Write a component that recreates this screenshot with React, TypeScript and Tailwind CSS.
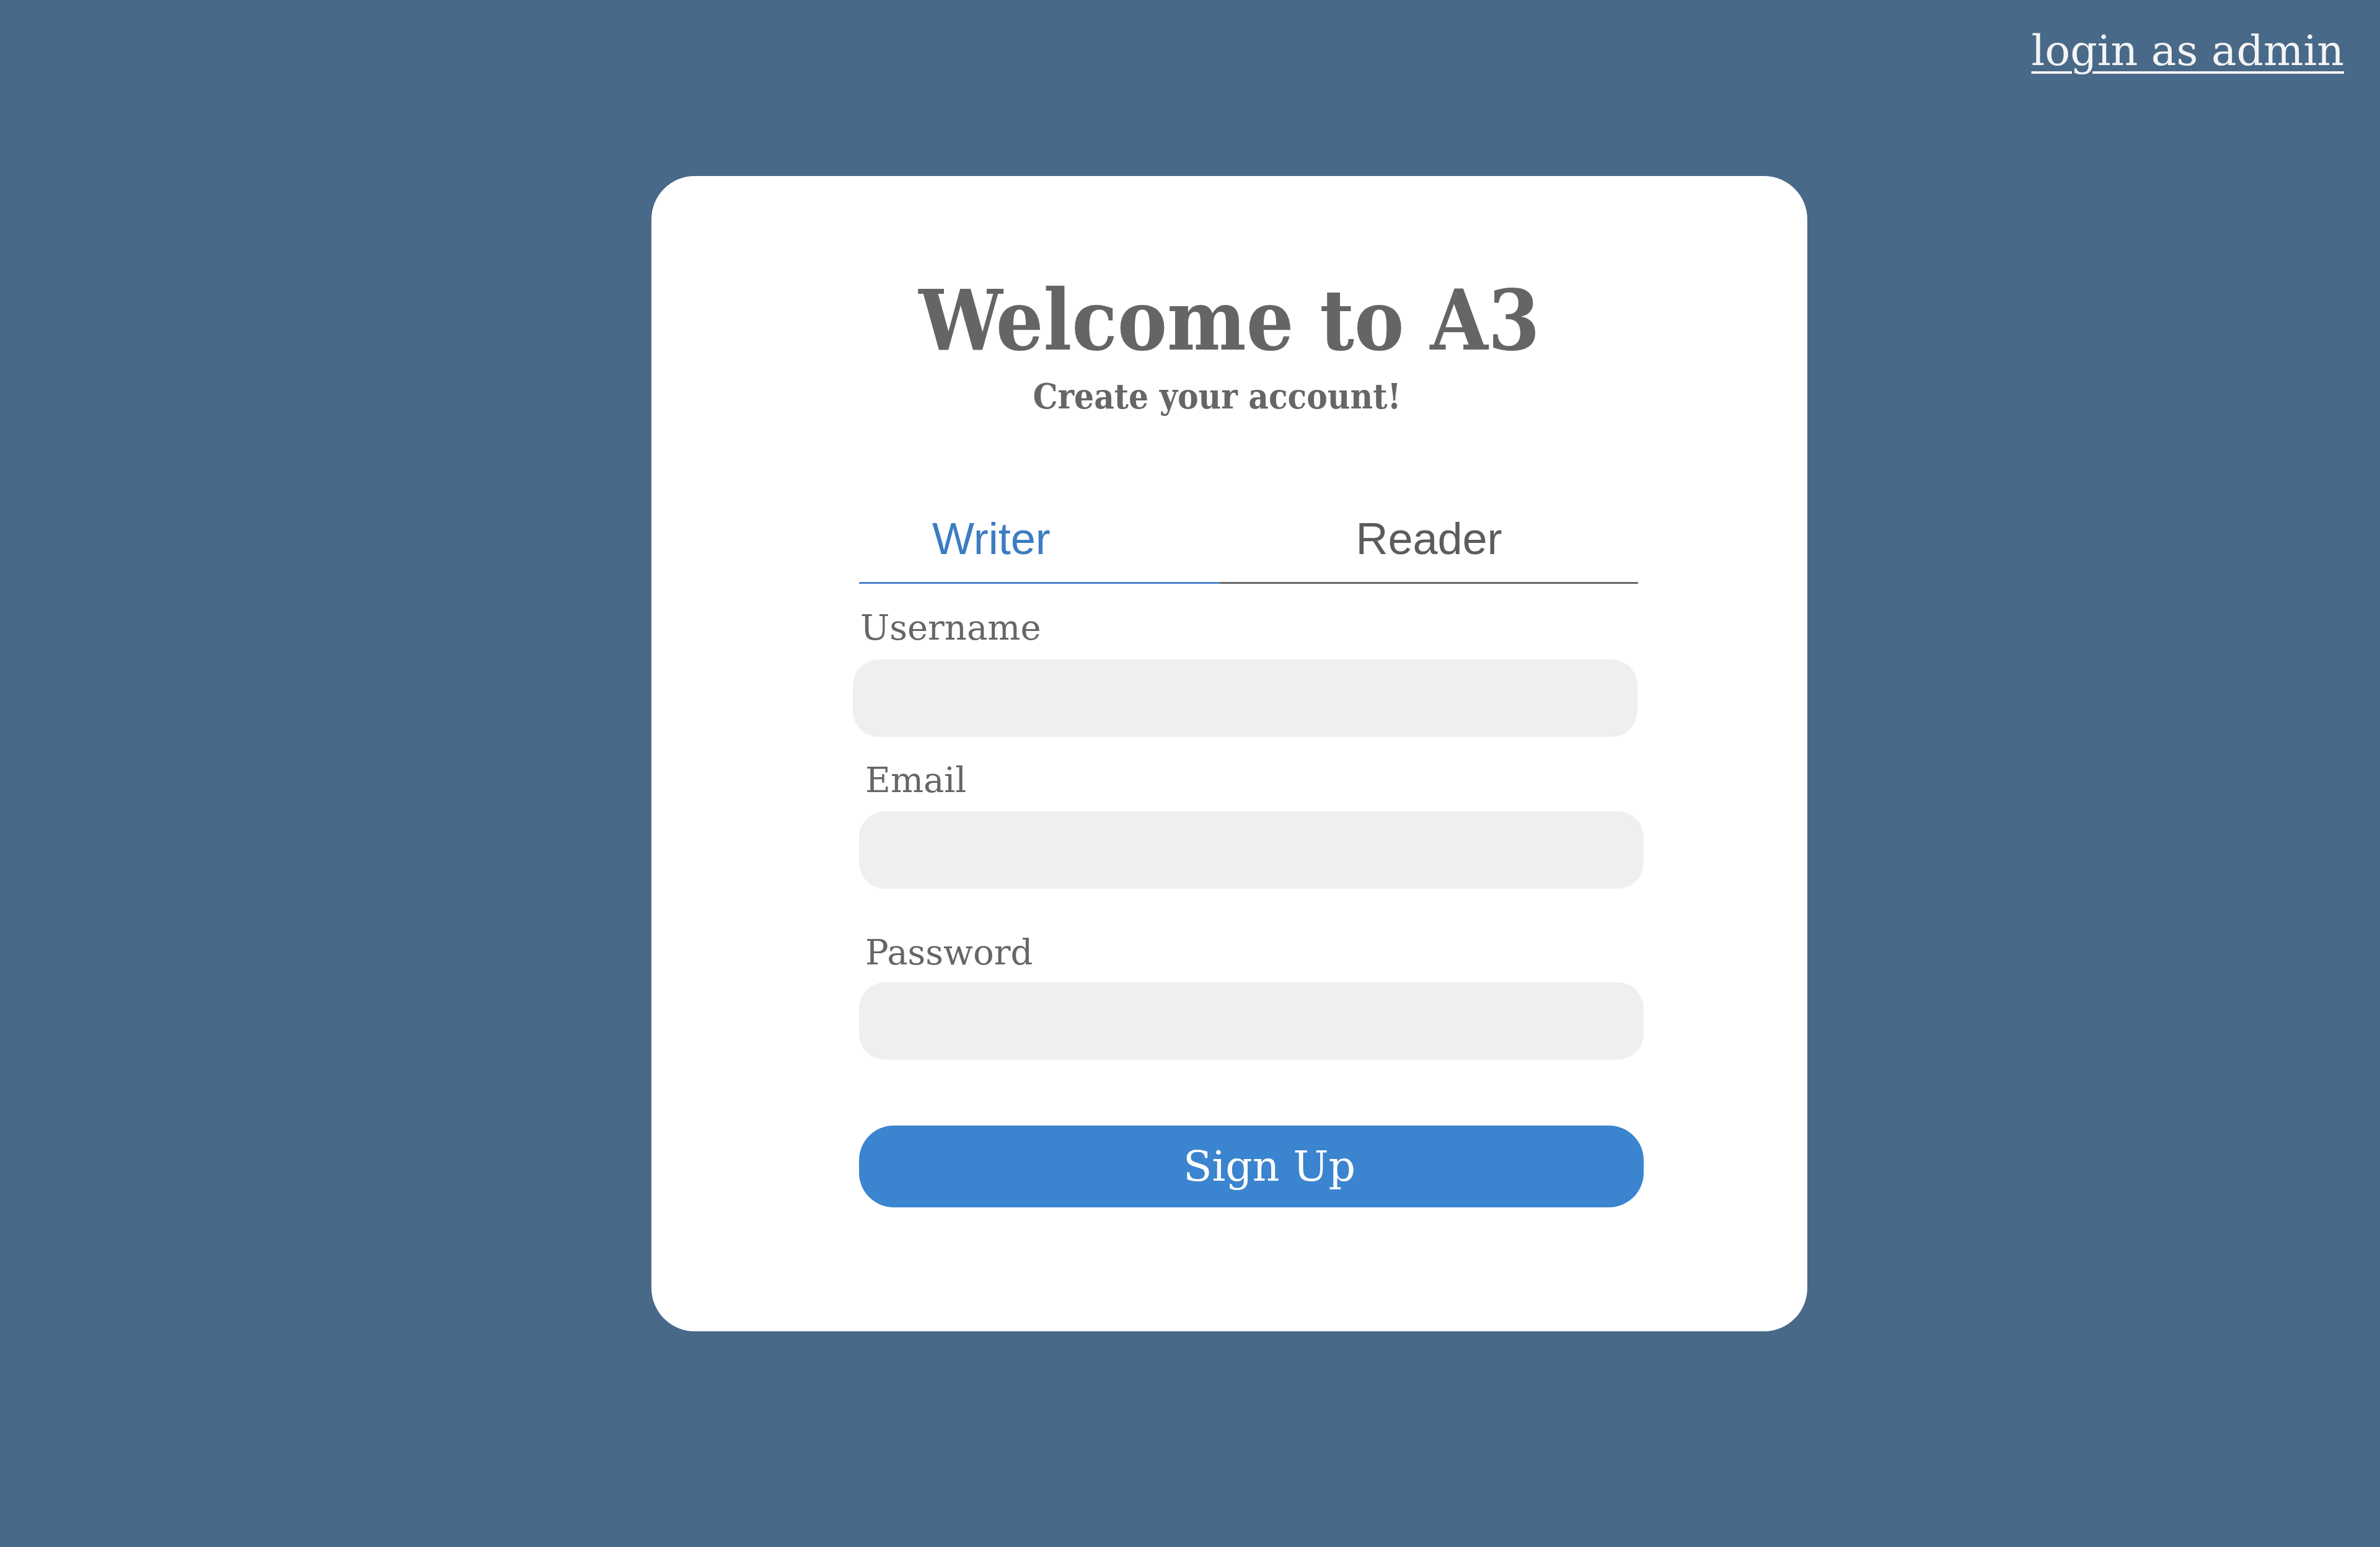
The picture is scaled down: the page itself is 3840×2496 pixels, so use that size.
import { useState } from "react";

const serif = "font-['DejaVu_Serif','Liberation_Serif',serif]";
const sans = "font-['Liberation_Sans',Arial,sans-serif]";

function Field({ label, type, labelClass, inputClass }: { label: string; type: string; labelClass: string; inputClass: string }) {
    return (
        <label className="flex flex-col">
            <span className={`${serif} text-[56px] leading-none text-[#666666] ${labelClass}`}>{label}</span>
            <input type={type} className={`h-[125px] rounded-[42px] bg-[#efefef] px-8 text-[48px] text-[#555] outline-none ${inputClass}`} />
        </label>
    );
}

export default function App() {
    const [tab, setTab] = useState<"writer" | "reader">("writer");

    return (
        <div className="min-h-screen bg-[#496989] flex flex-col">
            <div className="flex justify-end pr-[58px] pt-[48px]">
                <a href="#" className={`${serif} text-[68px] leading-none text-[#f4f4f4] underline decoration-[4px] underline-offset-[10px]`}>login as admin</a>
            </div>

            <main className="ml-[1051px] mt-[168px] w-[1865px] h-[1864px] rounded-[70px] bg-white pt-[166px]">
                <div className="flex flex-col items-center">
                    <h1 className={`${serif} font-stretch-condensed text-[134px] leading-none font-bold text-[#656565]`}>Welcome to A3</h1>
                    <p className={`${serif} font-stretch-condensed mt-[27px] pr-[40px] text-[56px] leading-none font-semibold text-[#666666]`}>Create your account!</p>
                </div>

                <div className="ml-[335px] w-[1266px] mt-[166px] flex flex-col">
                    <div className={`${sans} grid grid-cols-[582px_675px] text-[72px] leading-none`}>
                        <button onClick={() => setTab("writer")} className={`pb-[34px] pl-[118px] text-left border-b-[3px] ${tab === "writer" ? "text-[#3c7cc2] border-[#4a83c4]" : "text-[#5c5c5c] border-[#666666]"}`}>Writer</button>
                        <button onClick={() => setTab("reader")} className={`pb-[34px] text-center border-b-[3px] ${tab === "reader" ? "text-[#3c7cc2] border-[#4a83c4]" : "text-[#5c5c5c] border-[#666666]"}`}>Reader</button>
                    </div>

                    <div className="mt-[43px] flex flex-col">
                        <Field label="Username" type="text" labelClass="ml-[2px] mb-[23px]" inputClass="-ml-[10px] w-[1266px]" />
                        <div className="mt-[42px]">
                            <Field label="Email" type="email" labelClass="ml-[10px] mb-[22px]" inputClass="w-[1266px]" />
                        </div>
                        <div className="mt-[75px]">
                            <Field label="Password" type="password" labelClass="ml-[10px] mb-[20px]" inputClass="w-[1266px]" />
                        </div>
                    </div>

                    <button className={`${serif} mt-[106px] h-[132px] w-[1266px] rounded-[56px] bg-[#3b84cf] pl-[58px] text-[68px] leading-none text-white flex items-center justify-center`}>Sign Up</button>
                </div>
            </main>
        </div>
    );
}
